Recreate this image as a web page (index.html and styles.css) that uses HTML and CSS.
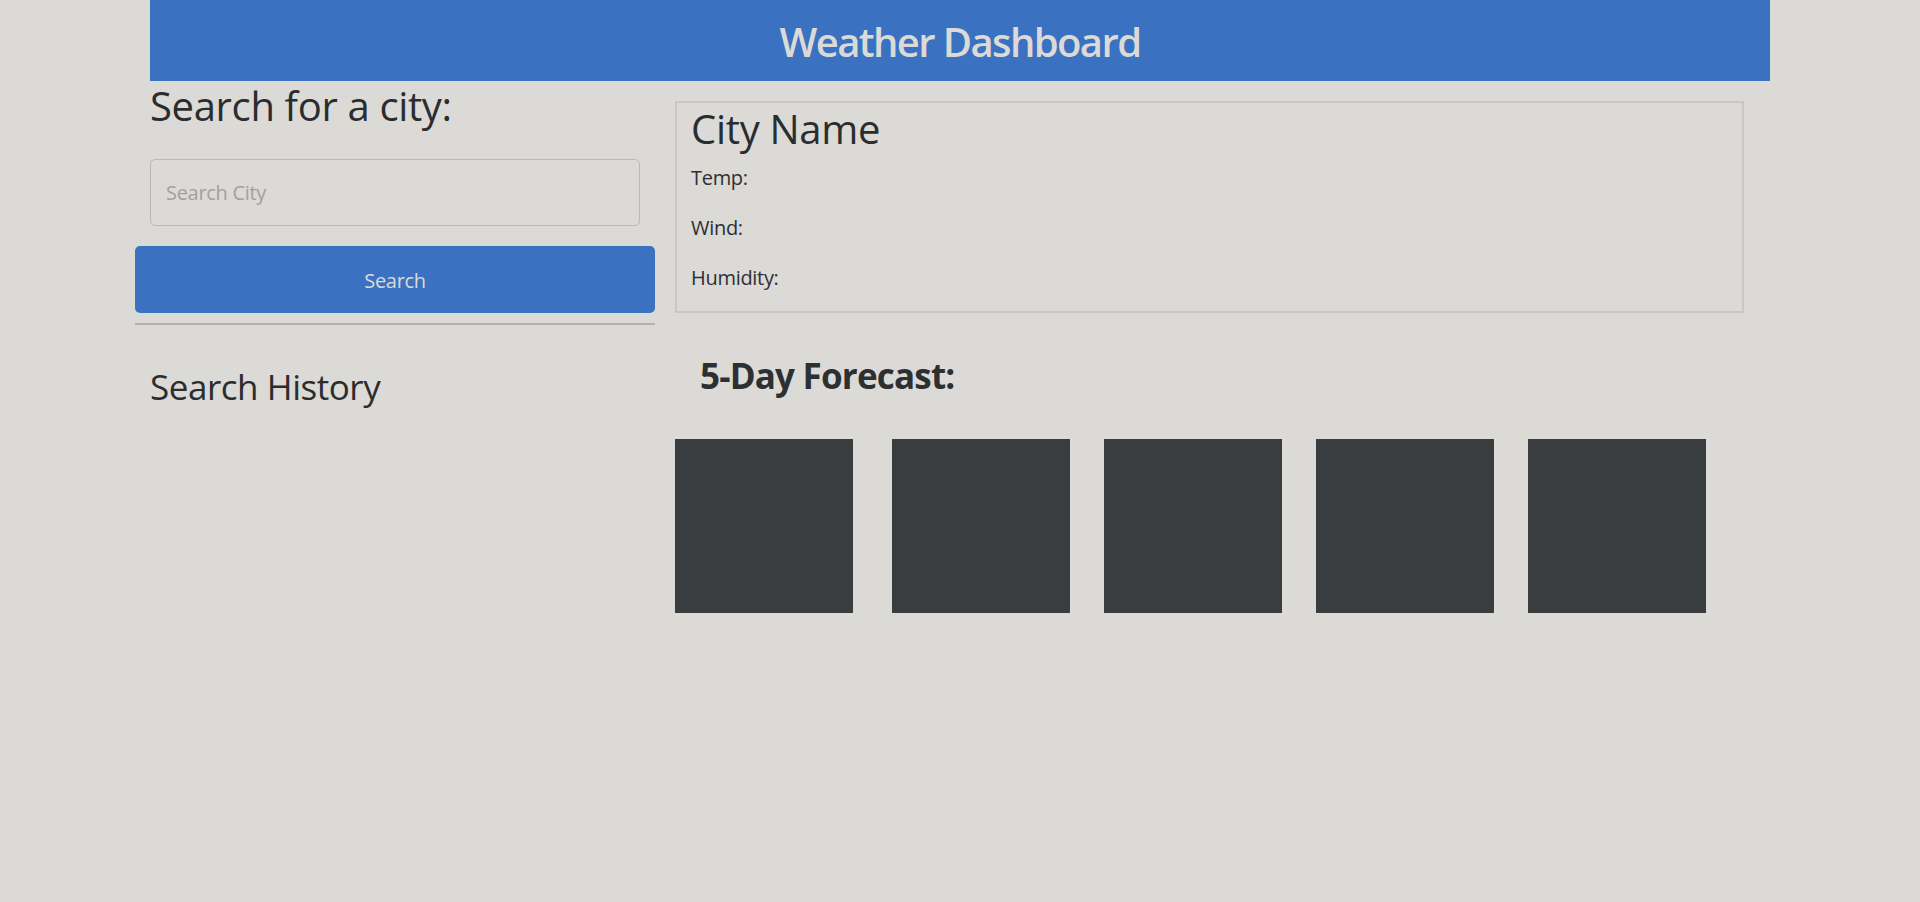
FILE: index.html
```html
<!DOCTYPE html>
<html lang="en">
<head>
<meta charset="utf-8">
<title>Weather Dashboard</title>
<link rel="stylesheet" href="styles.css">
</head>
<body>
<div class="container">
  <header class="app-header">
    <h1 class="app-title">Weather Dashboard</h1>
  </header>
  <div class="layout">
    <aside class="sidebar">
      <h2 class="search-title">Search for a city:</h2>
      <input class="search-input" type="text" placeholder="Search City">
      <button class="search-btn" type="button">Search</button>
      <hr class="divider">
      <h3 class="history-title">Search History</h3>
    </aside>
    <main class="content">
      <section class="current">
        <h2 class="city-name">City Name</h2>
        <p class="stat">Temp:</p>
        <p class="stat">Wind:</p>
        <p class="stat">Humidity:</p>
      </section>
      <h3 class="forecast-title">5-Day Forecast:</h3>
      <div class="forecast">
        <div class="day-card"></div>
        <div class="day-card"></div>
        <div class="day-card"></div>
        <div class="day-card"></div>
        <div class="day-card"></div>
      </div>
    </main>
  </div>
</div>
</body>
</html>
```

FILE: styles.css
```css
* { box-sizing: border-box; }

html, body {
  margin: 0;
  padding: 0;
  background: #dbdad6;
}

body {
  font-family: "Open Sans", "Noto Sans", sans-serif;
  font-size: 20px;
  line-height: 1.5;
  color: #2d3033;
  min-height: 902px;
}

.container {
  width: 1650px;
  margin: 0 auto;
}

.app-header {
  margin: 0 15px;
  height: 81px;
  background: #3b71c1;
  display: flex;
  align-items: center;
  justify-content: center;
}

.app-title {
  margin: 2px 0 0;
  font-size: 40px;
  font-weight: 600;
  line-height: 48px;
  letter-spacing: -1.6px;
  color: #dcdad6;
}

.layout {
  display: flex;
  align-items: flex-start;
}

.sidebar {
  width: 520px;
  flex: none;
  display: flex;
  flex-direction: column;
}

.search-title {
  margin: 1px 0 0;
  padding-left: 15px;
  font-size: 40px;
  font-weight: 500;
  line-height: 48px;
  letter-spacing: -0.35px;
  color: #2a2d30;
}

.search-input {
  margin: 29px 0 0 15px;
  width: 490px;
  height: 67px;
  padding: 0 15px;
  border: 1px solid #bab9b5;
  border-radius: 5px;
  background: #dbdad6;
  font-family: inherit;
  font-size: 20px;
  letter-spacing: -0.3px;
  color: #2d3033;
}

.search-input::placeholder { color: #a2a19d; }

.search-btn {
  margin-top: 20px;
  width: 520px;
  height: 67px;
  padding: 2px 0 0;
  border: 0;
  border-radius: 5px;
  background: #3b71c1;
  color: #dcdad6;
  font-family: inherit;
  font-size: 20px;
  letter-spacing: -0.3px;
}

.divider {
  margin: 10px 0 0;
  border: 0;
  height: 2px;
  background: #b3b2ae;
}

.history-title {
  margin: 41px 0 0;
  padding-left: 15px;
  font-size: 35px;
  font-weight: 500;
  line-height: 42px;
  letter-spacing: -0.45px;
  color: #2a2d30;
}

.content {
  margin-left: 20px;
  width: 1069px;
  flex: none;
}

.current {
  margin-top: 20px;
  border: 2px solid #c8c7c2;
  padding: 2px 14px 18px;
}

.city-name {
  margin: 0 0 10px;
  font-size: 40px;
  font-weight: 500;
  line-height: 48px;
  letter-spacing: -0.3px;
  color: #2a2d30;
}

.stat {
  margin: 0 0 20px;
  line-height: 30px;
  letter-spacing: -0.3px;
}

.stat:last-child { margin-bottom: 0; }

.forecast-title {
  margin: 42px 0 0;
  padding-left: 25px;
  font-size: 35px;
  font-weight: 700;
  line-height: 42px;
  letter-spacing: -0.8px;
}

.forecast {
  margin-top: 42px;
  display: flex;
  gap: 34px;
}

.day-card {
  width: 178px;
  height: 174px;
  background: #393d40;
}

.day-card:first-child { margin-right: 5px; }
```
